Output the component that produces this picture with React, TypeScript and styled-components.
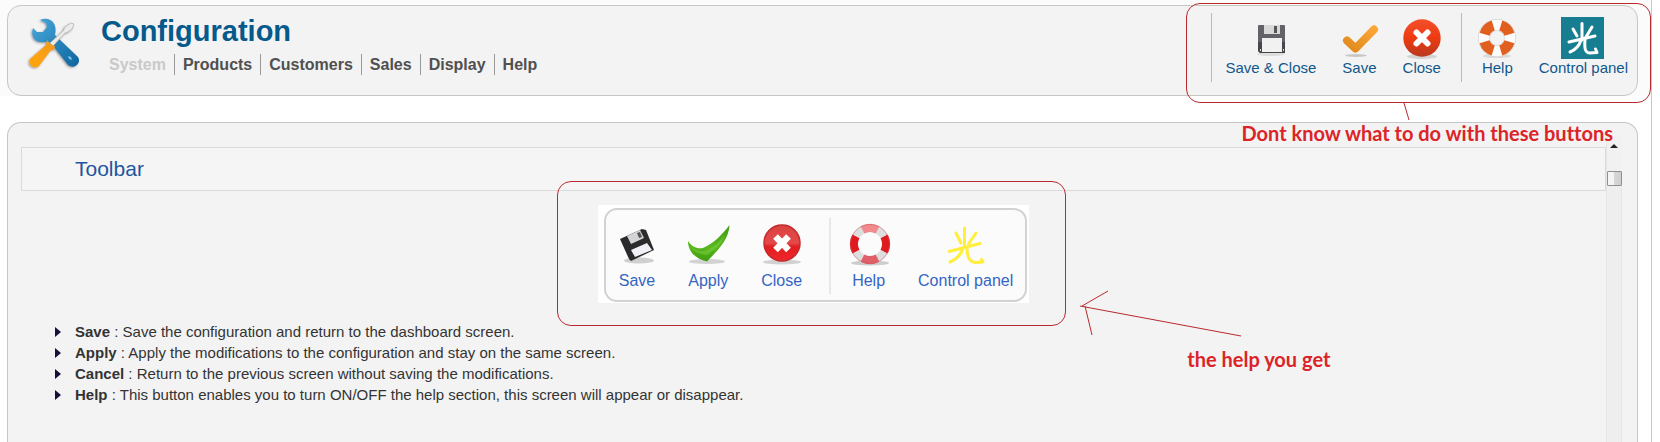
import React from "react";
import styled, { createGlobalStyle } from "styled-components";

const GlobalStyle = createGlobalStyle`
  *, *::before, *::after { box-sizing: border-box; }
  body {
    margin: 0;
    background: #fff;
    font-family: "Liberation Sans", Arial, sans-serif;
    color: #333;
    overflow: hidden;
  }
`;

const Page = styled.div`
  display: flex;
  flex-direction: column;
  min-height: 100vh;
  margin-right: 8px;
  border-right: 1px solid #c9c9c9;
`;

const HeaderBand = styled.div`
  padding: 5px 13px 0 7px;
  background: #fbfbfb;
`;

const HeaderPanel = styled.header`
  display: flex;
  align-items: flex-start;
  min-height: 91px;
  padding: 7px 9px 0 14px;
  border: 1px solid #c6c6c6;
  border-radius: 14px;
  background: #f3f3f3;
`;

const Heading = styled.div`
  flex: 1;
  padding: 0 0 0 15px;
`;

const Title = styled.h1`
  margin: 0;
  font-size: 29px;
  line-height: 36px;
  color: #055a8c;
`;

const Menu = styled.nav`
  display: flex;
  margin-top: 5px;
`;

const MenuLink = styled.a<{ $current?: boolean }>`
  padding: 1px 8px 0;
  border-left: 1px solid #999;
  font-size: 16px;
  line-height: 20px;
  font-weight: bold;
  text-decoration: none;
  color: ${(p) => (p.$current ? "#c9c9c9" : "#505050")};
  &:first-child { border-left: 0; }
`;

const Toolbar = styled.div`
  position: relative;
  display: flex;
  gap: 26px;
  height: 69px;
  padding-left: 13px;
  border-left: 1px solid #bbb;
`;

const Divider = styled.span`
  width: 1px;
  margin: 0 -6px;
  background: #bbb;
`;

const ToolButton = styled.button`
  display: flex;
  flex-direction: column;
  align-items: center;
  padding: 4px 0 0;
  border: 0;
  background: none;
  font: 15px/18px "Liberation Sans", Arial, sans-serif;
  color: #11578c;
  white-space: nowrap;
  cursor: pointer;
`;

const Icon = styled.svg`
  width: 44px;
  height: 44px;
  margin: 0 -10px -2px;
  overflow: visible;
`;

const TitleIcon = styled.svg`
  width: 64px;
  height: 64px;
`;

const Outline = styled.div<{ $inset: string }>`
  position: absolute;
  inset: ${(p) => p.$inset};
  border: 1px solid #b8292f;
  border-radius: 14px;
  pointer-events: none;
`;

const Note = styled.p<{ $place: string }>`
  position: absolute;
  ${(p) => p.$place}
  margin: 0;
  font: bold 20px/24px Lato, Calibri, sans-serif;
  font-variant-ligatures: none;
  color: #dc2328;
  white-space: nowrap;
  z-index: 2;
`;

const Pointer = styled.svg<{ $place: string }>`
  position: absolute;
  ${(p) => p.$place}
  fill: none;
  stroke: #b8292f;
  z-index: 2;
`;

const HelpPanel = styled.main`
  display: flex;
  flex: 1;
  margin: 26px 13px 0 7px;
  padding: 14px 15px 0 13px;
  border: 1px solid #c6c6c6;
  border-bottom: 0;
  border-radius: 14px 14px 0 0;
  background: #f3f3f3;
`;

const HelpContent = styled.section`
  flex: 1;
  padding-top: 10px;
`;

const SectionTitle = styled.h2`
  margin: 0;
  padding: 0 53px;
  border: 1px solid #d9dbdb;
  background: #f5f5f5;
  font-size: 21px;
  line-height: 42px;
  font-weight: normal;
  color: #1f55a0;
`;

const Figure = styled.figure`
  position: relative;
  width: fit-content;
  margin: 14px auto 18px;
  padding: 3px 2px 1px 6px;
  background: #fff;
`;

const SampleBar = styled.div`
  display: flex;
  gap: 33px;
  height: 94px;
  padding: 8px 12px 0 13px;
  border: 2px solid #d2d2d2;
  border-radius: 13px;
  background: #fbfbfb;
`;

const SampleButton = styled(ToolButton)`
  gap: 8px;
  height: 76px;
  font-size: 16px;
  color: #3465c4;
`;

const SampleDivider = styled.span`
  width: 2px;
  height: 76px;
  margin: 0 -12px 0 -6px;
  background: #e8e8e8;
`;

const List = styled.ul`
  margin: 0;
  padding: 0 0 0 34px;
  list-style: none;
  font-size: 15px;
  line-height: 21px;
`;

const ListItem = styled.li`
  display: flex;
  align-items: center;
  gap: 14px;
  &::before {
    content: "";
    border: solid transparent;
    border-width: 5px 0 5px 6px;
    border-left-color: #14103a;
  }
`;

const ScrollTrack = styled.div`
  display: flex;
  flex-direction: column;
  align-items: center;
  width: 16px;
  background: #eeeeee;
  border: solid #e6e6e6;
  border-width: 0 1px;
`;

const ScrollUp = styled.button`
  width: 15px;
  height: 34px;
  padding: 7px 0 0;
  border: 0;
  background: #f1f1f1;
  display: flex;
  align-items: flex-start;
  justify-content: center;
  &::before {
    content: "";
    border: solid transparent;
    border-width: 0 4px 4px;
    border-bottom-color: #222;
  }
`;

const ScrollThumb = styled.div`
  width: 15px;
  height: 15px;
  border: 1px solid #8f8f8f;
  border-radius: 1px;
  background: linear-gradient(90deg, #f4f4f4 45%, #d6d6d6 50%, #cfcfcf);
`;

const ToolsIcon = () => (
  <TitleIcon viewBox="0 0 64 64" aria-hidden="true">
    <defs>
      <linearGradient id="wrench" x1="0" y1="0" x2="1" y2="1">
        <stop offset="0" stopColor="#4aa8dc" />
        <stop offset="1" stopColor="#0b659d" />
      </linearGradient>
      <linearGradient id="handle" x1="1" y1="0" x2="0" y2="1">
        <stop offset="0" stopColor="#f39a1c" />
        <stop offset="1" stopColor="#ffa60c" />
      </linearGradient>
      <filter id="soft" x="-20%" y="-20%" width="140%" height="140%">
        <feDropShadow dx="-1" dy="1" stdDeviation="1" floodColor="#555" floodOpacity=".55" />
      </filter>
    </defs>
    <g filter="url(#soft)">
      <path
        d="M18 7 L24 10 L25 14 L21 19 L15 19 L11 15 C8 24 14 31 23 29 L28 29 L46 52 C52 57 60 50 56 44 L33 22 C36 10 28 3 18 7Z"
        fill="url(#wrench)"
      />
      <path d="M46 43 l3 1 1 3 -3-1z" fill="#7cc3e8" />
    </g>
    <g filter="url(#soft)">
      <path d="M28 30 L41 18 L43 14 L49 10 L52 11 L50 16 L46 19 L43 20 L31 33Z" fill="#ececec" stroke="#aaa" strokeWidth=".6" />
      <path d="M25 27 L28 31 L33 33 L32 37 L29 37 L17 53 C13 57 5 52 8 46 L24 32Z" fill="url(#handle)" />
    </g>
  </TitleIcon>
);

const FloppyIcon = () => (
  <Icon viewBox="0 0 44 44" aria-hidden="true">
    <ellipse cx="22" cy="37" rx="14" ry="2" fill="#ddd" />
    <path d="M9 9Q9 8 10 8H35Q36 8 36 9V36H11L9 34Z" fill="#626267" />
    <path d="M9 25H36V36H11L9 34Z" fill="#47474b" />
    <rect x="15" y="8" width="16" height="9" fill="#d9d9da" />
    <rect x="25" y="9" width="3" height="7" fill="#56565a" />
    <rect x="13" y="21" width="20" height="14" fill="#f1f1f2" />
    <path d="M11 33h1M34 33h1" stroke="#ddd" strokeWidth="2" />
  </Icon>
);

const CheckIcon = () => (
  <Icon viewBox="0 0 44 44" aria-hidden="true">
    <defs>
      <linearGradient id="amber" x1="0" y1="1" x2="1" y2="0">
        <stop offset="0" stopColor="#e08a1e" />
        <stop offset="1" stopColor="#fba536" />
      </linearGradient>
    </defs>
    <ellipse cx="19" cy="38.500" rx="11" ry="1.500" fill="#c8c8c8" />
    <path d="M10 23.500L18.500 31.500L37 12.500" fill="none" stroke="url(#amber)" strokeWidth="8" strokeLinecap="round" strokeLinejoin="round" />
  </Icon>
);

const CloseIcon = () => (
  <Icon viewBox="0 0 44 44" aria-hidden="true">
    <defs>
      <linearGradient id="ember" x1="0" y1="0" x2="0" y2="1">
        <stop offset="0" stopColor="#f4502a" />
        <stop offset=".5" stopColor="#ee3a12" />
        <stop offset="1" stopColor="#b83a1e" />
      </linearGradient>
    </defs>
    <ellipse cx="22" cy="39.500" rx="15" ry="2.500" fill="#d4d4d4" />
    <circle cx="22" cy="21" r="18.700" fill="url(#ember)" />
    <path d="M16.500 15.500L27.500 26.500M27.500 15.500L16.500 26.500" stroke="#fff" strokeWidth="6" strokeLinecap="round" />
  </Icon>
);

const BuoyIcon = () => (
  <Icon viewBox="0 0 44 44" aria-hidden="true">
    <ellipse cx="22" cy="39" rx="14" ry="2" fill="#dadada" />
    <circle cx="22" cy="21" r="13" fill="none" stroke="#d5d5d5" strokeWidth="12" />
    <circle cx="22" cy="21" r="13" fill="none" stroke="#fcfcfc" strokeWidth="10.500" />
    <circle
      cx="22"
      cy="21"
      r="13"
      fill="none"
      stroke="#e2601f"
      strokeWidth="10.500"
      pathLength="360"
      strokeDasharray="56 34"
      transform="rotate(17 22 21)"
    />
  </Icon>
);

const PanelIcon = () => (
  <Icon viewBox="0 0 44 44" aria-hidden="true">
    <rect x="0" y="0" width="43" height="42" fill="#177e91" />
    <g fill="none" stroke="#fff" strokeWidth="3" strokeLinecap="round" strokeLinejoin="round">
      <path d="M21 6.500V23" />
      <path d="M12 12L16 19" />
      <path d="M31 10L25 20" />
      <path d="M8 25L34 19" />
      <path d="M20 23C18 30 14 33 9 35" />
      <path d="M24 23C23 33 25 36 29 36L36 35.500L34.500 32" />
    </g>
  </Icon>
);

const SampleFloppyIcon = () => (
  <Icon viewBox="0 0 44 44" aria-hidden="true">
    <ellipse cx="24" cy="38.500" rx="15" ry="3" fill="#cfcfcf" />
    <path d="M5 17L27 7L31 8L39 28L16 39L14 37Z" fill="#2b2b2d" />
    <path d="M12 14L25 8L29 16L16 22Z" fill="#d4d4d6" />
    <path d="M22 11L25 10L27 15L24 16Z" fill="#555" />
    <path d="M16 28L32 21L37 28L20 35Z" fill="#f0f2f8" />
  </Icon>
);

const SampleCheckIcon = () => (
  <Icon viewBox="0 0 44 44" aria-hidden="true">
    <defs>
      <linearGradient id="leaf" x1="0" y1="0" x2="0" y2="1">
        <stop offset="0" stopColor="#3c9a12" />
        <stop offset=".6" stopColor="#58b81c" />
        <stop offset="1" stopColor="#3f9d10" />
      </linearGradient>
    </defs>
    <ellipse cx="21" cy="39.500" rx="18" ry="2.500" fill="#d2d2d2" />
    <path d="M2 19C6 25 11 27 17 26C28 21 36 13 43.500 3C43 18 31 29 21 39.500C11 37 2 31 2 19Z" fill="url(#leaf)" />
    <path d="M4 24C9 29 16 31 23 27C29 24 34 19 39 13C36 22 29 28 21 33C14 32 7 30 4 24Z" fill="#8bd850" opacity=".4" />
  </Icon>
);

const SampleCloseIcon = () => (
  <Icon viewBox="0 0 44 44" aria-hidden="true">
    <defs>
      <linearGradient id="cherry" x1="0" y1="0" x2="0" y2="1">
        <stop offset="0" stopColor="#d9433f" />
        <stop offset=".5" stopColor="#e5494b" />
        <stop offset=".6" stopColor="#e01e22" />
        <stop offset="1" stopColor="#f0282a" />
      </linearGradient>
    </defs>
    <ellipse cx="22" cy="40" rx="19" ry="2.500" fill="#d2d2d2" />
    <circle cx="22" cy="21" r="18" fill="url(#cherry)" stroke="#c22a2c" strokeWidth="1.500" />
    <path d="M15.500 14.500L28.500 28M28.500 14.500L15.500 28" stroke="#fff" strokeWidth="6.500" />
  </Icon>
);

const SampleBuoyIcon = () => (
  <Icon viewBox="0 0 44 44" aria-hidden="true">
    <ellipse cx="23" cy="41" rx="19" ry="2.500" fill="#cdcdcd" />
    <circle cx="23" cy="22" r="16" fill="none" stroke="#dedede" strokeWidth="8" />
    <circle cx="23" cy="22" r="16" fill="none" stroke="#e01a1e" strokeWidth="8" pathLength="360" strokeDasharray="56 124" transform="rotate(-28 23 22)" />
    <circle cx="23" cy="22" r="16" fill="none" stroke="#e0606a" strokeWidth="8" pathLength="360" strokeDasharray="56 304" transform="rotate(62 23 22)" />
    <circle cx="23" cy="22" r="16" fill="none" stroke="#f08a8c" strokeWidth="8" pathLength="360" strokeDasharray="56 304" transform="rotate(242 23 22)" />
    <circle cx="23" cy="22" r="19.500" fill="none" stroke="#d05055" strokeWidth=".8" opacity=".6" />
  </Icon>
);

const SamplePanelIcon = () => (
  <Icon viewBox="0 0 44 44" aria-hidden="true">
    <g fill="none" stroke="#ffee3a" strokeWidth="3" strokeLinecap="round" strokeLinejoin="round">
      <path d="M20.500 6V25" />
      <path d="M12 11L17 21" />
      <path d="M32 11L24.500 22" />
      <path d="M5 29.500L36 21.500" />
      <path d="M19 26C17 33 13 37 6 40" />
      <path d="M23 26C23 37 27 40 31 40.500L39 40L37.500 37.500" />
    </g>
  </Icon>
);

const menu = ["System", "Products", "Customers", "Sales", "Display", "Help"];

const entries = [
  ["Save", "Save the configuration and return to the dashboard screen."],
  ["Apply", "Apply the modifications to the configuration and stay on the same screen."],
  ["Cancel", "Return to the previous screen without saving the modifications."],
  ["Help", "This button enables you to turn ON/OFF the help section, this screen will appear or disappear."],
];

export default function App() {
  return (
    <>
      <GlobalStyle />
      <Page>
        <HeaderBand>
          <HeaderPanel>
            <ToolsIcon />
            <Heading>
              <Title>Configuration</Title>
              <Menu>
                {menu.map((label, i) => (
                  <MenuLink key={label} href="#" $current={i === 0}>{label}</MenuLink>
                ))}
              </Menu>
            </Heading>
            <Toolbar>
              <ToolButton><FloppyIcon />Save &amp; Close</ToolButton>
              <ToolButton><CheckIcon />Save</ToolButton>
              <ToolButton><CloseIcon />Close</ToolButton>
              <Divider />
              <ToolButton><BuoyIcon />Help</ToolButton>
              <ToolButton><PanelIcon />Control panel</ToolButton>
              <Outline $inset="-10px -23px -21px -26px" />
              <Pointer $place="top: 90px; right: 217px;" width="8" height="18">
                <path d="M1 0L6 17" />
              </Pointer>
              <Note $place="top: 108px; right: 15px;">Dont know what to do with these buttons</Note>
            </Toolbar>
          </HeaderPanel>
        </HeaderBand>
        <HelpPanel>
          <HelpContent>
            <SectionTitle>Toolbar</SectionTitle>
            <Figure>
              <SampleBar>
                <SampleButton><SampleFloppyIcon />Save</SampleButton>
                <SampleButton><SampleCheckIcon />Apply</SampleButton>
                <SampleButton><SampleCloseIcon />Close</SampleButton>
                <SampleDivider />
                <SampleButton><SampleBuoyIcon />Help</SampleButton>
                <SampleButton><SamplePanelIcon />Control panel</SampleButton>
              </SampleBar>
              <Outline $inset="-24px -37px -23px -41px" />
              <Pointer $place="top: 84px; left: calc(100% + 50px);" width="164" height="48">
                <path d="M1 17L162 47M29 2L3 17M6 17L13 46" />
              </Pointer>
              <Note $place="top: 142px; left: calc(100% + 158px);">the help you get</Note>
            </Figure>
            <List>
              {entries.map(([name, text]) => (
                <ListItem key={name}>
                  <span><strong>{name}</strong> : {text}</span>
                </ListItem>
              ))}
            </List>
          </HelpContent>
          <ScrollTrack>
            <ScrollUp aria-label="Scroll up" />
            <ScrollThumb />
          </ScrollTrack>
        </HelpPanel>
      </Page>
    </>
  );
}
